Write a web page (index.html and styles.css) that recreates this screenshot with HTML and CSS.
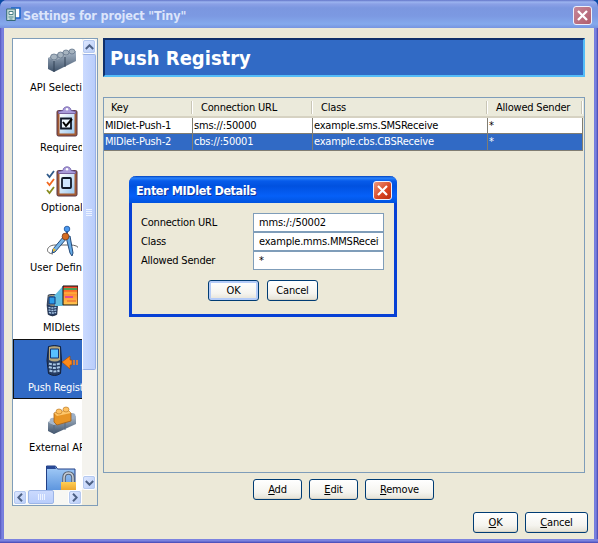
FILE: index.html
```html
<!DOCTYPE html>
<html lang="en">
<head>
<meta charset="utf-8">
<title>Settings for project "Tiny"</title>
<link rel="stylesheet" href="styles.css">
</head>
<body>
<svg width="0" height="0" class="defs" aria-hidden="true">
  <defs>
    <linearGradient id="steel" x1="0" y1="0" x2="0" y2="1"><stop offset="0" stop-color="#a9b8c8"/><stop offset="1" stop-color="#3f526a"/></linearGradient>
    <linearGradient id="paper" x1="0" y1="0" x2="1" y2="1"><stop offset="0" stop-color="#fff"/><stop offset="1" stop-color="#9cc8f0"/></linearGradient>
    <linearGradient id="folder" x1="0" y1="0" x2="0" y2="1"><stop offset="0" stop-color="#a5cdf8"/><stop offset="1" stop-color="#4c88d8"/></linearGradient>
    <linearGradient id="gold" x1="0" y1="0" x2="0" y2="1"><stop offset="0" stop-color="#ffcf55"/><stop offset="1" stop-color="#e08810"/></linearGradient>
    <linearGradient id="screen" x1="0" y1="0" x2="0" y2="1"><stop offset="0" stop-color="#f03c28"/><stop offset=".4" stop-color="#ff8a30"/><stop offset="1" stop-color="#ffc850"/></linearGradient>
    <symbol id="clipboard" viewBox="0 0 22 31">
      <rect x="1" y="4.500" width="20" height="25.500" rx="1.500" fill="#a45c34" stroke="#573448"/>
      <path d="M3.500 8h15v19.500h-15z" fill="url(#paper)"/>
      <path d="M2.500 7.500V5.500L7 4.500C7 2 9 0.800 11 .8S15 2 15 4.500l4.500 1v2z" fill="#a99ad8" stroke="#6b5aa6" stroke-width=".8"/>
      <circle cx="11" cy="3.300" r="1.200" fill="#fff"/>
    </symbol>
    <symbol id="phone" viewBox="0 0 17 32">
      <path d="M2.500 1.500q6-2 12 0l1 14-1 13q-6 4-12 0l-1.500-13z" fill="#263d63" stroke="#14213b"/>
      <path d="M3 2q5-1.500 11 0v13q-5 3-11 0z" fill="#b6a77c"/>
      <path d="M4.500 4h8v9h-8z" fill="#58c0ff" stroke="#113476"/>
      <path d="M3 18.500q5 2 11 0M3 22q5 2 11 0M3.500 25.500q5 2 10 0" fill="none" stroke="#a7c5e4" stroke-width="2" stroke-dasharray="3 1"/>
    </symbol>
  </defs>
</svg>
<main class="window">
  <header class="titlebar">
    <svg class="app-icon" width="15" height="15" viewBox="0 0 15 15"><path d="M5 1h9v10H9" fill="#fff" stroke="#1863c8" stroke-width="1.500"/><path d="M.7 2h8.600v11.500H.7z" fill="#c5dcda" stroke="#356a78"/><path d="M3 4.500h4v3H3z" fill="#fff" stroke="#4a8187"/><path d="M2.500 10h5M3.500 12h3" stroke="#568d90"/></svg>
    <h1>Settings for project "Tiny"</h1>
    <button class="close" aria-label="Close"><svg width="17" height="17" viewBox="0 0 17 17"><path d="M4 4l9 9M13 4l-9 9" stroke="#fff" stroke-width="2.300"/></svg></button>
  </header>
  <div class="content">
    <aside class="sidebar">
      <nav class="list">
        <div class="item"><svg width="32" height="32" viewBox="0 0 32 32"><path d="M2 13l17-6 11-1v10L8 27l-6-3z" fill="url(#steel)"/><path d="M2 13l6 3 22-9-11-1z" fill="#a3afbc"/><path d="M8 16v11M19 12v10" stroke="#334357"/><g fill="#a7b4c0" stroke="#63758a" stroke-width=".8"><ellipse cx="8" cy="12" rx="3.500" ry="3"/><ellipse cx="14.500" cy="10" rx="3" ry="3"/><ellipse cx="20" cy="7.500" rx="3" ry="2.500"/><ellipse cx="26" cy="6.500" rx="3" ry="2.500"/></g></svg><span class="l1">API Selection</span></div>
        <div class="item"><svg width="32" height="32" viewBox="0 0 32 32"><use href="#clipboard" x="10" y="1" width="22" height="31"/><path d="M15 13.500h10v10H15z" fill="#eef6ff" stroke="#101828" stroke-width="1.800"/><path d="M17 17l3 4 6-7" fill="none" stroke="#000" stroke-width="2"/></svg><span class="l2">Required</span></div>
        <div class="item"><svg width="32" height="32" viewBox="0 0 32 32"><use href="#clipboard" x="10" y="1" width="22" height="31"/><rect x="16" y="13" width="9" height="10" rx="1" fill="#cfe6ff" stroke="#101828" stroke-width="1.800"/><path d="M1 9l2.500 3L8 6" fill="none" stroke="#315b8b" stroke-width="1.800"/><path d="M1 17l2.500 3L8 14" fill="none" stroke="#f06820" stroke-width="1.800"/><path d="M1 25l2.500 3L8 22" fill="none" stroke="#888c20" stroke-width="1.800"/></svg><span class="l3">Optional</span></div>
        <div class="item"><svg width="32" height="32" viewBox="0 0 32 32"><path d="M7 29C-2 28 1 20 9 20h15q8 0 9 4" fill="none" stroke="#555" stroke-width=".9"/><path d="M18 11l3 2L9 27l-3 1 1-4z" fill="#77b5e8" stroke="#254b7b"/><path d="M20 12l4-1 3 17-1 3-2-3z" fill="#65aae6" stroke="#254b7b"/><path d="M7 23l3 2-3 2z" fill="#e8b72e"/><path d="M21 5v7" stroke="#315b98" stroke-width="2"/><circle cx="21" cy="4" r="2.800" fill="#4b98ef" stroke="#195095" stroke-width=".8"/><circle cx="19.500" cy="11.500" r="3.400" fill="#d66c21" stroke="#733d25" stroke-width=".8"/></svg><span class="l4">User Defined</span></div>
        <div class="item"><svg width="32" height="32" viewBox="0 0 32 32"><use href="#phone" x="0" y="9" width="13" height="23"/><path d="M7 12l10-11v20l-8 0z" fill="#62bee0"/><path d="M3 12h6v7H3z" fill="#2d9be7" stroke="#113476"/><path d="M17 1h15v19H17z" fill="url(#screen)" stroke="#111"/><path d="M18 4h13" stroke="#4c9e56" stroke-width="2"/><path d="M18 8h13" stroke="#ffc844"/><path d="M19 12h8" stroke="#d430b0" stroke-width="1.500"/><path d="M21 16h9" stroke="#e65b35"/></svg><span class="l5">MIDlets</span></div>
        <div class="item selected"><svg width="32" height="32" viewBox="0 0 32 32"><use href="#phone" x="0" y="0" width="17" height="32"/><path d="M16 17l8-6v4h2v5h-2v4z" fill="#ff8a18" stroke="#a94a00" stroke-width=".7"/><path d="M28 15v5M31 15v5" stroke="#ff8118" stroke-width="1.500"/></svg><span class="l6">Push Registry</span></div>
        <div class="item"><svg width="32" height="32" viewBox="0 0 32 32"><path d="M2 17l17-5 11-1v8L8 29l-6-3z" fill="url(#steel)"/><path d="M2 17l6 3 22-9-11-1z" fill="#b2becb"/><path d="M8 20v9M19 17v8" stroke="#566b83"/><circle cx="7" cy="16" r="3.300" fill="#a5b7cc"/><ellipse cx="26" cy="11" rx="3.500" ry="3" fill="#9cafc6"/><path d="M8 8l14-3 3 3v8l-14 4-3-3z" fill="#e89525" stroke="#a35f19" stroke-width=".8"/><path d="M8 8l3 3 14-3-3-3z" fill="#ffc86b"/><ellipse cx="13" cy="6.500" rx="3" ry="2.500" fill="#ffc161" stroke="#bd7d27" stroke-width=".7"/><ellipse cx="20" cy="4.500" rx="3" ry="2.500" fill="#ffc161" stroke="#bd7d27" stroke-width=".7"/></svg><span class="l7">External APIs</span></div>
        <div class="item"><svg width="32" height="32" viewBox="0 0 32 32"><path d="M.5 31V1h9l2 3H29v27z" fill="url(#folder)" stroke="#203f86"/><path d="M1 1h8l1 3H1z" fill="#294995"/><path d="M18 17v-4q0-5 4.500-5t4.500 5v4" fill="none" stroke="#56606f" stroke-width="3.500"/><path d="M18 17v-4q0-5 4.500-5t4.500 5v4" fill="none" stroke="#c8cfd8" stroke-width="1.500"/><path d="M15 17h15v14H15z" fill="url(#gold)"/></svg></div>
      </nav>
      <div class="vscroll">
        <div class="arrow"><svg width="9" height="6" viewBox="0 0 9 6"><path d="M.8 5l3.700-3.700L8.200 5" /></svg></div>
        <div class="vthumb"><i></i><i></i><i></i><i></i></div>
        <div class="arrow"><svg width="9" height="6" viewBox="0 0 9 6"><path d="M.8 1l3.700 3.700L8.200 1" /></svg></div>
      </div>
      <div class="hscroll">
        <div class="arrow"><svg width="6" height="9" viewBox="0 0 6 9"><path d="M5 .8L1.300 4.500 5 8.200" /></svg></div>
        <div class="hthumb"><i></i><i></i><i></i><i></i></div>
        <div class="arrow end"><svg width="6" height="9" viewBox="0 0 6 9"><path d="M1 .8l3.700 3.700L1 8.200" /></svg></div>
      </div>
    </aside>
    <section class="panel">
      <h2>Push Registry</h2>
      <div class="table">
        <div class="row head"><div>Key</div><div>Connection URL</div><div>Class</div><div>Allowed Sender</div></div>
        <div class="row"><div>MIDlet-Push-1</div><div>sms://:50000</div><div>example.sms.SMSReceive</div><div>*</div></div>
        <div class="row active"><div>MIDlet-Push-2</div><div>cbs://:50001</div><div>example.cbs.CBSReceive</div><div>*</div></div>
      </div>
      <div class="actions"><button class="btn add"><u>A</u>dd</button><button class="btn edit"><u>E</u>dit</button><button class="btn remove"><u>R</u>emove</button></div>
    </section>
  </div>
  <footer class="footer"><button class="btn ok"><u>O</u>K</button><button class="btn cancel"><u>C</u>ancel</button></footer>
  <section class="dialog" role="dialog">
    <header class="dialog-title"><h3>Enter MIDlet Details</h3><button class="close" aria-label="Close"><svg width="17" height="17" viewBox="0 0 17 17"><path d="M4 4l9 9M13 4l-9 9" stroke="#fff" stroke-width="2.200"/></svg></button></header>
    <div class="form">
      <span>Connection URL</span><div class="field">mms:/:/50002</div>
      <span>Class</span><div class="field">example.mms.MMSReceive</div>
      <span>Allowed Sender</span><div class="field">*</div>
    </div>
    <div class="dialog-actions"><button class="btn default">OK</button><button class="btn">Cancel</button></div>
  </section>
</main>
</body>
</html>
```
FILE: styles.css
```css
* { box-sizing: border-box; }
body { margin: 0; overflow: hidden; background: #0a4ba5; font: 11px/14px "DejaVu Sans Condensed", "DejaVu Sans", sans-serif; font-stretch: condensed; color: #000; }
.defs { position: absolute; }
h1, h2, h3 { margin: 0; white-space: nowrap; }
button { font: inherit; color: inherit; margin: 0; padding: 0; }
.window { position: relative; width: 598px; height: 543px; padding: 0 4px 4px; border-radius: 7px 7px 0 0; background: linear-gradient(90deg, #5254bd 0, #7b83e0 2px, #747bdc 4px, #747bdc 594px, #7b83e0 596px, #4444ae 598px); display: flex; flex-direction: column; overflow: hidden; }
.window::after { content: ""; position: absolute; left: 0; right: 0; bottom: 0; height: 4px; background: linear-gradient(#7b83df 50%, #5053bd 80%); }
.titlebar { height: 28px; flex: none; margin: 0 -4px; padding: 3px 7px 0; display: flex; align-items: center; background: linear-gradient(#6275c8 0, #9cb4f0 2px, #8ba1e6 4px, #7b97e0 8px, #7c99e2 16px, #84a9ec 24px, #7694e0 28px); }
.app-icon { margin: -3px 1px 0 -1px; }
.titlebar h1 { font-size: 12.500px; line-height: 16px; color: #dce5fb; flex: 1; letter-spacing: -.12px; margin-left: 1px; }
.close { width: 19px; height: 19px; padding: 0; border: 1px solid #eef1fc; border-radius: 3px; background: linear-gradient(135deg, #c58799, #b15d6c); display: flex; align-items: center; justify-content: center; }
.titlebar .close { margin-right: -1px; margin-top: -1px; }
.content { background: #ece9d8; height: 478px; flex: none; display: flex; padding: 10px 9px 0 8px; }
.sidebar { width: 86px; height: 468px; border: 1px solid #7f9db9; display: grid; grid-template: 451px 15px / 69px 15px; background: #ece9d8; }
.list { background: #fff; overflow: hidden; }
.item { width: 97px; height: 60px; padding: 5px 0 0 32px; border: 1px solid transparent; border-left: 0; display: flex; flex-direction: column; }
.item svg { flex: none; margin-left: 1px; }
.item span { white-space: nowrap; margin-top: 4px; }
.item.selected { background: #316ac5; color: #fff; border: 1px solid #111; padding-left: 31px; }
.item .l1 { margin-left: -15px; } .item .l2 { margin-left: -5px; } .item .l3 { margin-left: -4px; } .item .l4 { margin-left: -15px; } .item .l5 { margin-left: -2px; } .item .l6 { margin-left: -17px; letter-spacing: -.15px; } .item .l7 { margin-left: -16px; letter-spacing: -.1px; }
.vscroll { background: #f4f3ee; display: flex; flex-direction: column; }
.arrow { width: 14px; height: 15px; flex: none; border: 1px solid #fff; outline: 1px solid #b5c9ef; outline-offset: -2px; border-radius: 3px; background: linear-gradient(135deg, #e0e9ff, #b7ccf8); display: flex; align-items: center; justify-content: center; }
.arrow path { fill: none; stroke: #4d6185; stroke-width: 2; }
.vthumb { width: 14px; height: 316px; border: 1px solid #98b0e5; border-left-color: #fff; border-radius: 2px; background: linear-gradient(90deg, #cbdafe, #b9cdfb); display: flex; flex-direction: column; justify-content: center; align-items: center; gap: 1px; }
.vthumb + .arrow { margin-top: auto; }
.vthumb i { width: 6px; height: 1px; background: #edf3ff; }
.hscroll { background: #f7f7f3; display: flex; }
.hthumb { width: 26px; height: 14px; margin-left: 1px; border: 1px solid #9cb5e7; border-radius: 2px; background: linear-gradient(#cbdafe, #b9cdfb); display: flex; justify-content: center; align-items: center; gap: 1px; }
.hthumb i { width: 1px; height: 6px; background: #edf3ff; }
.end { margin-left: auto; }
.panel { margin-left: 5px; width: 482px; }
.panel h2 { height: 39px; padding: 5px; border: 2px solid; border-color: #10306b #55bdf8 #55bdf8 #10306b; background: #316ac5; color: #fff; font-size: 20px; line-height: 26px; }
.table { height: 376px; margin-top: 20px; border: 1px solid #7f9db9; letter-spacing: -.2px; }
.row { display: grid; grid-template-columns: 89px 120px 175px 95px; width: 479px; height: 16px; background: #fff; border-bottom: 1px solid #807d72; }
.row div { border-right: 1px solid #807d72; padding-left: 1px; line-height: 15px; white-space: nowrap; overflow: hidden; }
.row.head { height: 20px; width: 480px; background: #ebeadb; border-bottom: 0; box-shadow: inset 0 -2px #d6d2c2; }
.row.head div { border: 0; padding: 1px 0 0 7px; line-height: 18px; background: linear-gradient(90deg, #c9c6b6 50%, #fff 50%) right 0 top 3px / 2px 13px no-repeat; }
.row.head div:nth-child(n+2) { padding-left: 8px; }
.row.active { background: #316ac5; color: #fff; height: 17px; }
.actions { display: flex; gap: 7px; margin: 6px 0 0 150px; }
.btn { width: 51px; height: 21px; border: 1px solid #003c74; border-radius: 3px; background: linear-gradient(#fff, #f5f4ef 65%, #e4e1d5); box-shadow: inset 0 -1px #d9d4c6; line-height: 18px; white-space: nowrap; letter-spacing: -.2px; }
.add, .edit { width: 49px; }
.remove { width: 69px; }
.footer { background: #ece9d8; flex: 1; padding: 6px 6px 0; display: flex; justify-content: flex-end; gap: 7px; }
.ok { width: 45px; }
.cancel { width: 63px; }
.dialog { position: absolute; left: 129px; top: 176px; width: 268px; height: 141px; border: 3px solid #0640d5; border-top: 0; border-radius: 7px 7px 0 0; background: #ece9d8; letter-spacing: -.2px; }
.dialog-title { height: 27px; margin: 0 -3px; padding: 0 5px 0 7px; border-radius: 7px 7px 0 0; display: flex; align-items: center; justify-content: space-between; background: linear-gradient(#0040bd 0, #2b83fa 2px, #075bea 5px, #0051df 10px, #0560f8 20px, #0053df 27px); }
.dialog h3 { color: #fff; font-size: 12.500px; text-shadow: 1px 1px #10369b; letter-spacing: -.4px; padding-top: 3px; }
.dialog .close { margin-top: 1px; background: linear-gradient(135deg, #ed987e, #d84320 60%, #b82e10); }
.form { display: grid; grid-template: repeat(3, 19px) / 112px 131px; margin: 10px 0 0 9px; line-height: 19px; }
.field { border: 1px solid #7f9db9; background: #fff; padding: 0 4px 0 5px; line-height: 17px; overflow: clip; overflow-clip-margin: content-box; white-space: nowrap; }
.dialog-actions { display: flex; gap: 8px; margin: 10px 0 0 76px; }
.default { box-shadow: inset 0 0 0 2px #b5ccf8; }
```
